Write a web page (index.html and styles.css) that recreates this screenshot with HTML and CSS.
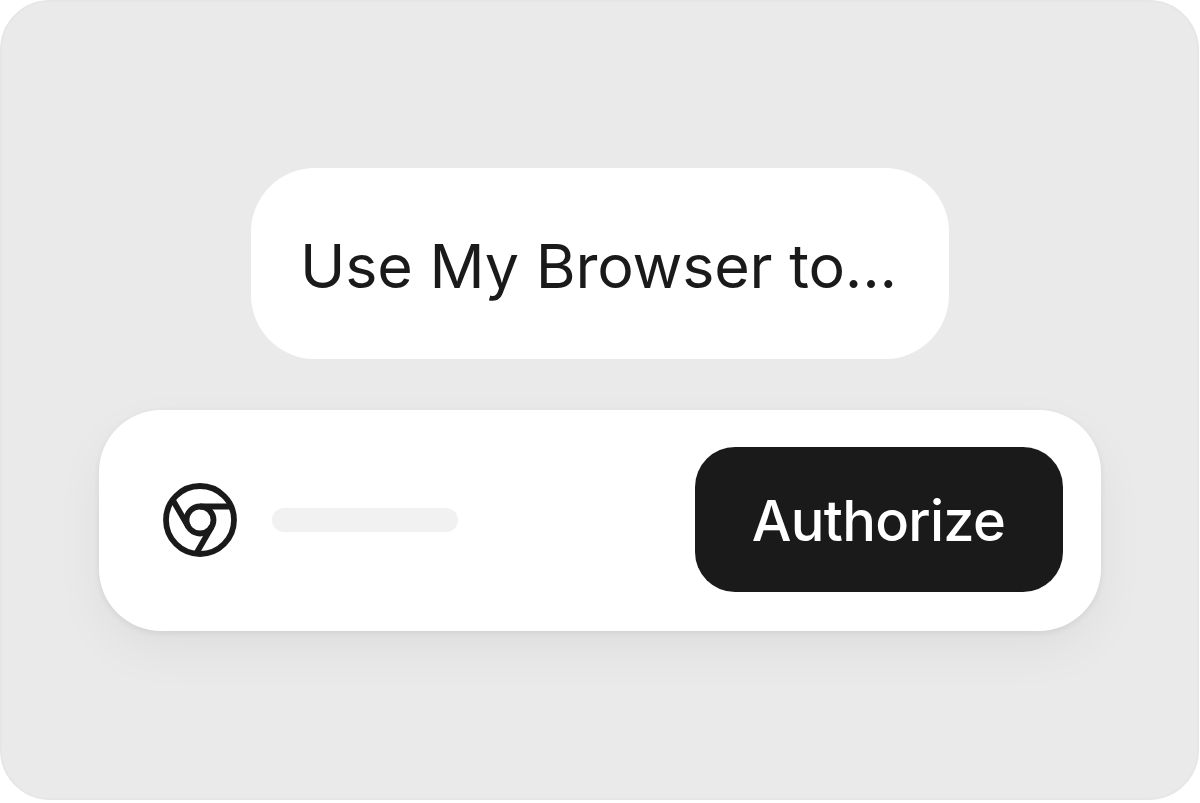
FILE: index.html
```html
<!DOCTYPE html>
<html lang="en">

<head>
    <meta charset="UTF-8">
    <meta name="viewport" content="width=device-width, initial-scale=1.0">
    <title>My Browser</title>
    <link rel="stylesheet" href="styles.css">
</head>

<body>
    <div class="card">
        <div class="prompt"><span class="prompt-text">Use My Browser to...</span></div>

        <div class="panel">
            <svg class="browser-icon" viewBox="0 0 76 76" aria-hidden="true">
                <circle cx="38" cy="38" r="34" />
                <circle cx="38" cy="38" r="13.5" />
                <path d="M38 24.5H69M49.7 44.8L34.2 71.6M26.3 44.8L10.8 18" />
            </svg>
            <div class="placeholder"></div>
            <button type="button" class="authorize">Authorize</button>
        </div>
    </div>
</body>

</html>
```
FILE: styles.css
```css
* {
    box-sizing: border-box;
}

body {
    margin: 0;
    background-color: #fff;
    font-family: Inter, "Liberation Sans", sans-serif;
}

.card {
    display: flex;
    flex-direction: column;
    align-items: center;
    gap: 51px;
    width: 1199px;
    height: 800px;
    padding-top: 166px;
    border: 2px solid #e6e6e6;
    border-radius: 50px;
    background-color: #eaeaea;
}

.prompt {
    display: flex;
    align-items: center;
    justify-content: center;
    width: 698px;
    height: 191px;
    padding: 5px 2px 0 0;
    border-radius: 64px;
    background-color: #fff;
}

.prompt-text {
    font-size: 61px;
    line-height: 72px;
    letter-spacing: -0.2px;
    color: #1a1a1a;
    white-space: nowrap;
}

.panel {
    display: flex;
    align-items: center;
    width: 1002px;
    height: 221px;
    padding: 0 38px 2px 63px;
    border-radius: 62px;
    background-color: #fff;
    box-shadow: 0 2px 6px rgba(0, 0, 0, 0.07), 0 20px 50px rgba(0, 0, 0, 0.05);
}

.browser-icon {
    width: 76px;
    height: 76px;
    fill: none;
    stroke: #1a1a1a;
    stroke-width: 5.8;
}

.placeholder {
    width: 186px;
    height: 24px;
    margin-left: 34px;
    border-radius: 12px;
    background-color: #f1f1f1;
}

.authorize {
    width: 368px;
    height: 145px;
    margin-left: auto;
    padding: 2px 0 0;
    border: none;
    border-radius: 40px;
    background-color: #1a1a1a;
    color: #fff;
    font-family: inherit;
    font-size: 56px;
    font-weight: 500;
    letter-spacing: -0.7px;
    cursor: pointer;
}
```
